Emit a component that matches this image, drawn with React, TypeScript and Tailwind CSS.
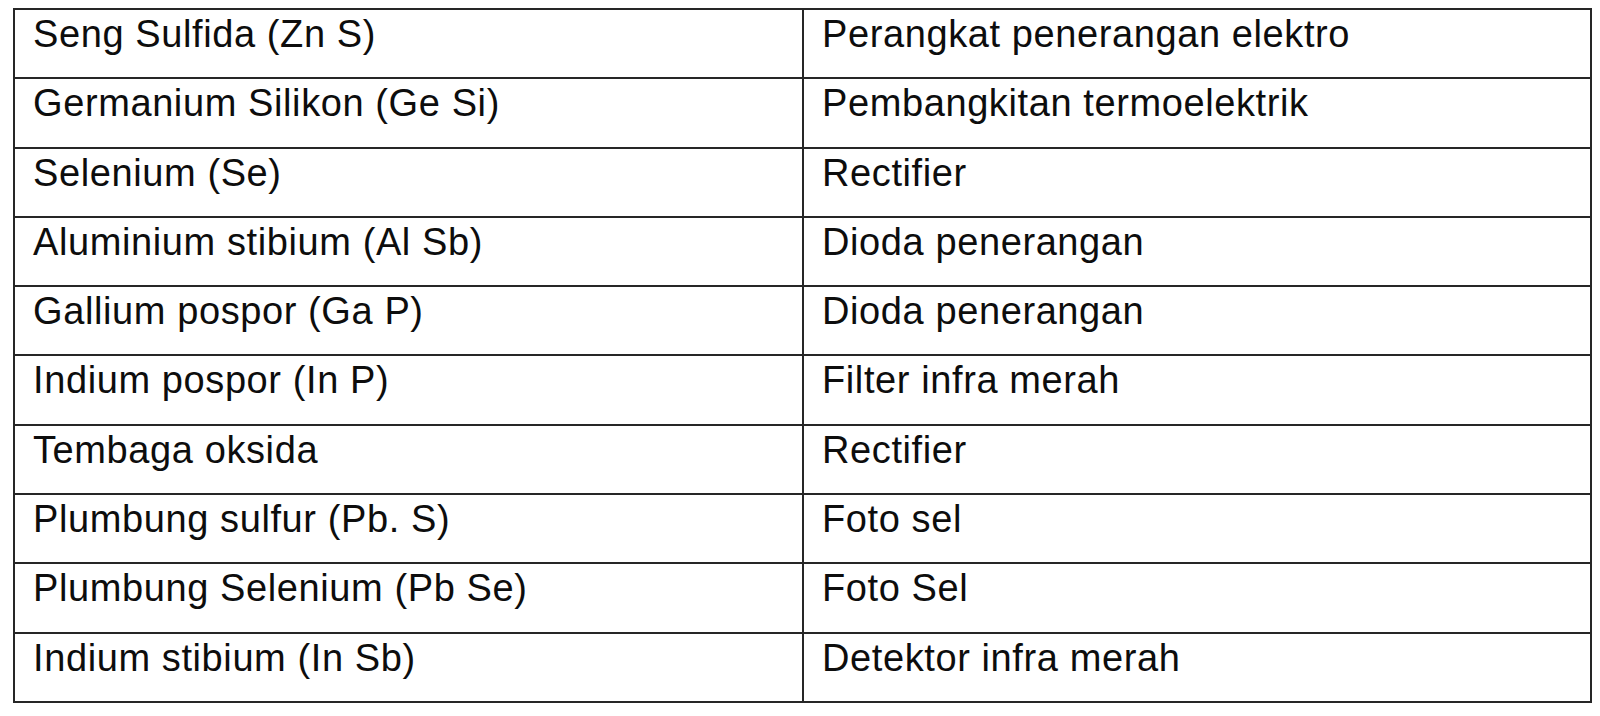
const rows: [string, string][] = [
  ['Seng Sulfida (Zn S)', 'Perangkat penerangan elektro'],
  ['Germanium Silikon (Ge Si)', 'Pembangkitan termoelektrik'],
  ['Selenium (Se)', 'Rectifier'],
  ['Aluminium stibium (Al Sb)', 'Dioda penerangan'],
  ['Gallium pospor (Ga P)', 'Dioda penerangan'],
  ['Indium pospor (In P)', 'Filter infra merah'],
  ['Tembaga oksida', 'Rectifier'],
  ['Plumbung sulfur (Pb. S)', 'Foto sel'],
  ['Plumbung Selenium (Pb Se)', 'Foto Sel'],
  ['Indium stibium (In Sb)', 'Detektor infra merah'],
];

export default function App() {
  return (
    <div
      className="w-[1600px] h-[716px] bg-white pt-[8px] pl-[13px] overflow-hidden"
      style={{ fontFamily: '"Liberation Sans", Arial, sans-serif' }}
    >
      <div className="w-[1579px] border-x-2 border-b-2 border-[#262626]">
        {rows.map(([material, use]) => (
          <div
            key={material + use}
            className="grid grid-cols-[787px_1fr] h-[69.3px] border-t-2 border-[#262626]"
          >
            <div className="pl-[18px] pt-[5px] text-[38px] leading-[38px] tracking-[0.6px] text-[#0d0d0d]">
              {material}
            </div>
            <div className="border-l-2 border-[#262626] pl-[18px] pt-[5px] text-[38px] leading-[38px] tracking-[0.6px] text-[#0d0d0d]">
              {use}
            </div>
          </div>
        ))}
      </div>
    </div>
  );
}
